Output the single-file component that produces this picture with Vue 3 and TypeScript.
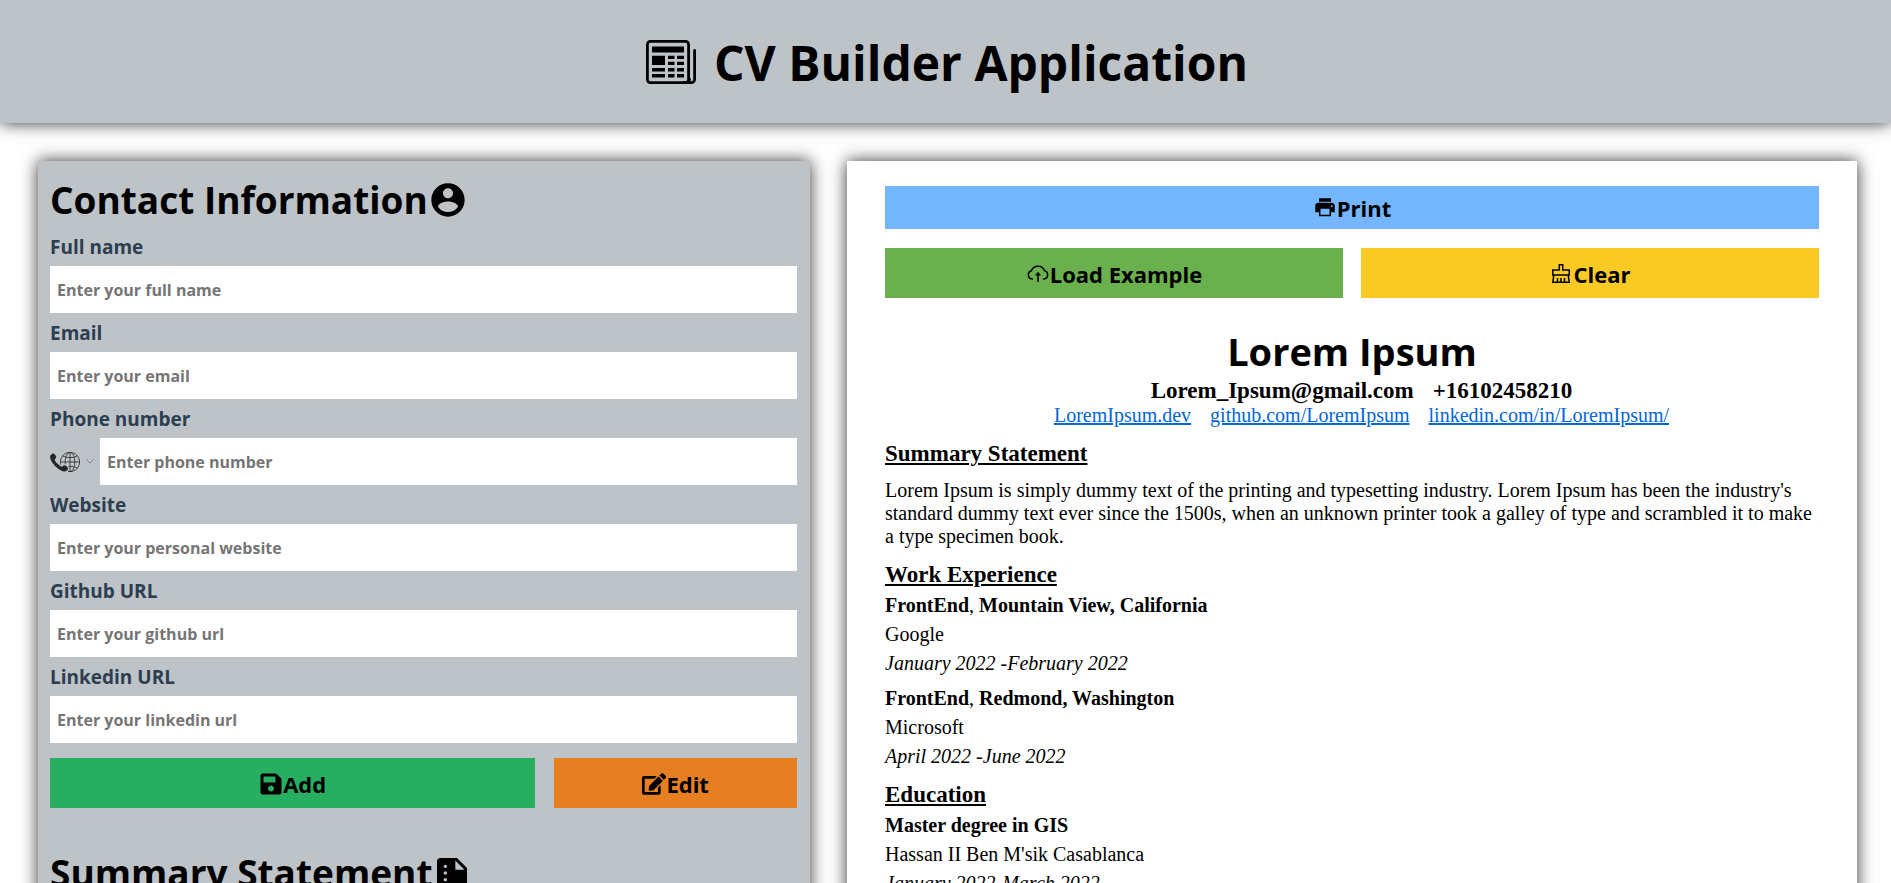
<script setup lang="ts">
import { reactive } from 'vue'

interface Field {
  id: 'name' | 'email' | 'phone' | 'website' | 'github' | 'linkedin'
  label: string
  type: string
  placeholder: string
}

interface Job {
  title: string
  place: string
  company: string
  dates: string
}

const fields: Field[] = [
  { id: 'name', label: 'Full name', type: 'text', placeholder: 'Enter your full name' },
  { id: 'email', label: 'Email', type: 'email', placeholder: 'Enter your email' },
  { id: 'phone', label: 'Phone number', type: 'tel', placeholder: 'Enter phone number' },
  { id: 'website', label: 'Website', type: 'url', placeholder: 'Enter your personal website' },
  { id: 'github', label: 'Github URL', type: 'url', placeholder: 'Enter your github url' },
  { id: 'linkedin', label: 'Linkedin URL', type: 'url', placeholder: 'Enter your linkedin url' },
]

const form = reactive<Record<Field['id'], string>>({
  name: '', email: '', phone: '', website: '', github: '', linkedin: '',
})

const links: string[] = ['LoremIpsum.dev', 'github.com/LoremIpsum', 'linkedin.com/in/LoremIpsum/']

const jobs: Job[] = [
  { title: 'FrontEnd', place: 'Mountain View, California', company: 'Google', dates: 'January 2022 -February 2022' },
  { title: 'FrontEnd', place: 'Redmond, Washington', company: 'Microsoft', dates: 'April 2022 -June 2022' },
]
</script>

<template>
  <div class="app">
    <header class="header">
      <svg class="news" viewBox="0 0 50 44" aria-hidden="true">
        <g fill="none" stroke="currentColor" stroke-width="2.8">
          <rect x="1.4" y="1.4" width="41.2" height="41.2" rx="3" />
          <path d="M48.6 10.500v29a3.200 3.200 0 0 1-3.200 3.100H38M42.500 42.500l1-3.500" stroke-linecap="round" />
        </g>
        <path d="M6 6.500h32v6H6zM6 15.700h13V25H6zM22 15.700h6.500V19H22zM31 15.700h7V19h-7zM22 21.700h6.500V25H22zM31 21.700h7V25h-7zM6 28h13v3.400H6zM22 28h6.500v3.400H22zM31 28h7v3.400h-7zM6 34h13v3.600H6zM22 34h6.500v3.600H22zM31 34h7v3.600h-7z" />
      </svg>
      <h1>CV Builder Application</h1>
    </header>

    <main class="columns">
      <section class="editor">
        <form @submit.prevent>
          <h2 class="section-title">
            Contact Information
            <svg viewBox="0 0 24 24" aria-hidden="true">
              <path d="M12 2C6.48 2 2 6.48 2 12s4.480 10 10 10 10-4.480 10-10S17.520 2 12 2zm0 3c1.660 0 3 1.340 3 3s-1.340 3-3 3-3-1.340-3-3 1.340-3 3-3zm0 14.200c-2.500 0-4.710-1.280-6-3.220.030-1.990 4-3.080 6-3.080 1.990 0 5.970 1.090 6 3.080-1.290 1.940-3.500 3.220-6 3.220z" />
            </svg>
          </h2>
          <div v-for="field in fields" :key="field.id" class="field">
            <label :for="field.id">{{ field.label }}</label>
            <div class="control">
              <div v-if="field.id === 'phone'" class="country">
                <svg class="globe" viewBox="0 0 75 50" aria-hidden="true">
                  <g fill="none" stroke="currentColor" stroke-width="2" stroke-miterlimit="10">
                    <path stroke-linecap="round" d="M47.2,36.1C48.1,36,49,36,50,36c7.4,0,14,1.700,18.500,4.300" />
                    <path d="M68.6,9.6C64.2,12.3,57.5,14,50,14c-7.400,0-14-1.700-18.500-4.300" />
                    <line x1="26" y1="25" x2="74" y2="25" />
                    <line x1="50" y1="1" x2="50" y2="49" />
                    <path stroke-linecap="round" d="M46.3,48.7c1.2,0.2,2.5,0.3,3.7,0.3c13.3,0,24-10.7,24-24S63.3,1,50,1S26,11.7,26,25c0,2,0.3,3.9,0.7,5.8" />
                    <path stroke-linecap="round" d="M46.8,48.2c1,0.6,2.1,0.8,3.2,0.8c6.6,0,12-10.7,12-24S56.6,1,50,1S38,11.7,38,25c0,1.4,0.1,2.7,0.2,4c0,0.1,0,0.2,0,0.2" />
                  </g>
                  <path fill="currentColor" d="M12.4,17.9c2.9-2.9,5.4-4.8,0.3-11.2S4.1,5.2,1.3,8.1C-2,11.4,1.1,23.5,13.1,35.6s24.3,15.2,27.5,11.9c2.8-2.8,7.8-6.3,1.4-11.5s-8.3-2.6-11.2,0.3c-2,2-7.2-2.2-11.7-6.7S10.4,19.9,12.4,17.9z" />
                </svg>
                <svg class="chevron" viewBox="0 0 8 5" aria-hidden="true">
                  <path d="M.5.5 4 4 7.500.5" fill="none" stroke="currentColor" />
                </svg>
                <select aria-label="Phone number country"></select>
              </div>
              <input :id="field.id" v-model="form[field.id]" :type="field.type" :placeholder="field.placeholder" />
            </div>
          </div>
          <div class="actions">
            <button type="submit" class="btn add">
              <svg width="24" height="24" viewBox="0 0 448 512" aria-hidden="true">
                <path d="M433.941 129.941l-83.882-83.882A48 48 0 0 0 316.118 32H48C21.490 32 0 53.490 0 80v352c0 26.510 21.490 48 48 48h352c26.510 0 48-21.490 48-48V163.882a48 48 0 0 0-14.059-33.941zM224 416c-35.346 0-64-28.654-64-64 0-35.346 28.654-64 64-64s64 28.654 64 64c0 35.346-28.654 64-64 64zm96-304.520V212c0 6.627-5.373 12-12 12H76c-6.627 0-12-5.373-12-12V108c0-6.627 5.373-12 12-12h228.520c3.183 0 6.235 1.264 8.485 3.515l3.480 3.480A11.996 11.996 0 0 1 320 111.480z" />
              </svg>Add
            </button>
            <button type="button" class="btn edit">
              <svg width="24" height="24" viewBox="0 0 576 512" aria-hidden="true">
                <path d="M402.6 83.2l90.2 90.2c3.8 3.8 3.8 10 0 13.8L274.4 405.6l-92.8 10.3c-12.4 1.4-22.9-9.1-21.5-21.5l10.3-92.8L388.8 83.2c3.8-3.8 10-3.8 13.8 0zm162-22.9l-48.8-48.8c-15.2-15.2-39.9-15.2-55.2 0l-35.4 35.4c-3.8 3.8-3.8 10 0 13.8l90.2 90.2c3.8 3.8 10 3.8 13.8 0l35.4-35.4c15.2-15.3 15.2-40 0-55.2zM384 346.2V448H64V128h229.8c3.2 0 6.2-1.3 8.5-3.5l40-40c7.6-7.6 2.2-20.5-8.5-20.500H48C21.5 64 0 85.5 0 112v352c0 26.5 21.5 48 48 48h352c26.5 0 48-21.5 48-48V306.2c0-10.7-12.9-16-20.5-8.5l-40 40c-2.2 2.3-3.5 5.3-3.5 8.5z" />
              </svg>Edit
            </button>
          </div>
        </form>

        <h2 class="section-title">
          Summary Statement
          <svg viewBox="0 0 24 24" aria-hidden="true">
            <path d="M15 3H5c-1.1 0-2 .9-2 2v14c0 1.1.9 2 2 2h14c1.1 0 2-.9 2-2V9l-6-6zM8 17c-.55 0-1-.45-1-1s.45-1 1-1 1 .45 1 1-.45 1-1 1zm0-4c-.55 0-1-.45-1-1s.45-1 1-1 1 .45 1 1-.45 1-1 1zm0-4c-.55 0-1-.45-1-1s.45-1 1-1 1 .45 1 1-.45 1-1 1zm6 1V4.500l5.500 5.500H14z" />
          </svg>
        </h2>
      </section>

      <section class="preview">
        <button type="button" class="btn print">
          <svg width="24" height="24" viewBox="0 0 512 512" aria-hidden="true">
            <path fill-rule="evenodd" d="M400 144H112c-35 0-64 29-64 64v139h80v85h256v-85h80V208c0-35-29-64-64-64zm-48 256H160V272h192v128zm48-164a20 20 0 1 1 0-40 20 20 0 0 1 0 40zM384 48H128v72h256V48z" />
          </svg>Print
        </button>
        <div class="toolbar">
          <button type="button" class="btn load">
            <svg width="24" height="24" viewBox="0 0 24 24" aria-hidden="true">
              <g fill="none" stroke="currentColor" stroke-width="1.5">
                <path d="M7 17H6a4.200 4.200 0 0 1-.6-8.200A7 7 0 0 1 18.600 8.800 4.200 4.200 0 0 1 18 17h-1" />
                <path d="M12 20v-8" />
              </g>
              <path d="M12 9.800 8.900 13.500h6.200z" />
            </svg>Load Example
          </button>
          <button type="button" class="btn clear">
            <svg width="24" height="24" viewBox="0 0 24 24" aria-hidden="true">
              <path fill="none" stroke="currentColor" stroke-width="1.5" d="M10.300 8V2.800h3.400V8h6.500v5H3.800V8zM4.800 13 3.800 20.200h16.400l-1-7.200M8.500 20v-4M12 20v-4M15.500 20v-4" />
            </svg>Clear
          </button>
        </div>

        <article class="cv">
          <h2 class="cv-name">Lorem Ipsum</h2>
          <div class="cv-contact">
            <span>Lorem_Ipsum@gmail.com</span>
            <span>+16102458210</span>
          </div>
          <div class="cv-links">
            <a v-for="link in links" :key="link" :href="'#' + link">{{ link }}</a>
          </div>

          <h3>Summary Statement</h3>
          <p class="cv-summary">
            Lorem Ipsum is simply dummy text of the printing and typesetting industry. Lorem Ipsum has been the
            industry's standard dummy text ever since the 1500s, when an unknown printer took a galley of type and
            scrambled it to make a type specimen book.
          </p>

          <h3>Work Experience</h3>
          <div v-for="job in jobs" :key="job.company" class="entry">
            <p><b>{{ job.title }}</b>, <b>{{ job.place }}</b></p>
            <p>{{ job.company }}</p>
            <p><i>{{ job.dates }}</i></p>
          </div>

          <h3>Education</h3>
          <div class="entry">
            <p><b>Master degree in GIS</b></p>
            <p>Hassan II Ben M'sik Casablanca</p>
            <p><i>January 2022-March 2022</i></p>
          </div>
        </article>
      </section>
    </main>
  </div>
</template>

<style>
html {
  scrollbar-width: none;
}
body {
  margin: 0;
  background: #fff;
}
</style>

<style scoped>
* {
  box-sizing: border-box;
}
.app {
  font-family: "Segoe UI", "Open Sans", "Noto Sans", sans-serif;
  font-weight: 700;
  color: #000;
}
h1, h2, h3, p {
  margin: 0;
}
svg {
  fill: currentColor;
  flex: none;
}
.header {
  display: flex;
  align-items: center;
  justify-content: center;
  gap: 18px;
  height: 123px;
  padding-left: 3px;
  background: #bdc3c7;
  box-shadow: 0 0 16px rgba(0, 0, 0, 0.8);
}
.header h1 {
  padding-top: 2px;
  font-size: 48px;
  line-height: 64px;
}
.news {
  width: 50px;
  height: 44px;
}
.columns {
  display: grid;
  grid-template-columns: 772fr 1010fr;
  gap: 37px;
  padding: 38px 34px 38px 38px;
}
.editor,
.preview {
  box-shadow: 0 0 16px rgba(0, 0, 0, 0.8);
}
.editor {
  background: #bdc3c7;
  padding: 12px 13px 12px 12px;
}
.section-title {
  display: flex;
  align-items: center;
  font-size: 37px;
  line-height: 54px;
}
.section-title svg {
  width: 40px;
  height: 40px;
}
.field label {
  display: block;
  padding: 7px 0 5px;
  font-size: 19px;
  line-height: 27px;
  color: #2c3e50;
}
.control {
  display: flex;
}
.country {
  position: relative;
  display: flex;
  align-items: center;
  gap: 6px;
  width: 50px;
}
.globe {
  width: 30px;
  height: 20px;
  color: #23272a;
}
.chevron {
  width: 8px;
  height: 5px;
  color: #7d8286;
}
.country select {
  position: absolute;
  inset: 0;
  width: 100%;
  opacity: 0;
}
input {
  flex: 1;
  min-width: 0;
  height: 47px;
  padding: 1px 7px 0;
  border: 0;
  background: #fff;
  font: inherit;
  font-size: 16px;
}
input::placeholder {
  color: #757575;
}
.actions {
  display: grid;
  grid-template-columns: 2fr 1fr;
  gap: 19px;
  margin: 15px 0 38px;
}
.btn {
  display: flex;
  align-items: center;
  justify-content: center;
  height: 50px;
  padding: 1px 0 0;
  border: 0;
  color: #000;
  font: inherit;
  font-size: 22px;
  line-height: 32px;
}
.add { background: #27ae60; }
.edit { background: #e67e22; }
.print { width: 100%; height: 43px; background: #74b6ff; }
.load { background: #6ab04c; }
.clear { background: #f9ca24; }
.preview {
  padding: 25px 38px 38px;
  background: #fff;
}
.toolbar {
  display: grid;
  grid-template-columns: 1fr 1fr;
  gap: 18px;
  margin-top: 19px;
}
.cv {
  padding-top: 27px;
  font-family: "Times New Roman", "Liberation Serif", serif;
  font-size: 20px;
  font-weight: 400;
  line-height: 23px;
}
.cv-name {
  font-family: "Segoe UI", "Open Sans", "Noto Sans", sans-serif;
  font-size: 38px;
  line-height: 52px;
  text-align: center;
}
.cv-contact,
.cv-links {
  display: flex;
  justify-content: center;
  gap: 19px;
  padding-left: 19px;
}
.cv-contact {
  font-size: 23px;
  font-weight: 700;
  line-height: 27px;
}
.cv-links {
  line-height: 23px;
}
.cv-links a {
  color: #0366d6;
}
h3 {
  margin: 12px 0 5px;
  font-size: 23px;
  line-height: 29px;
  text-decoration: underline;
}
.cv-summary {
  margin-top: 11px;
}
.entry {
  display: grid;
  gap: 6px;
  margin-bottom: 12px;
}
</style>
